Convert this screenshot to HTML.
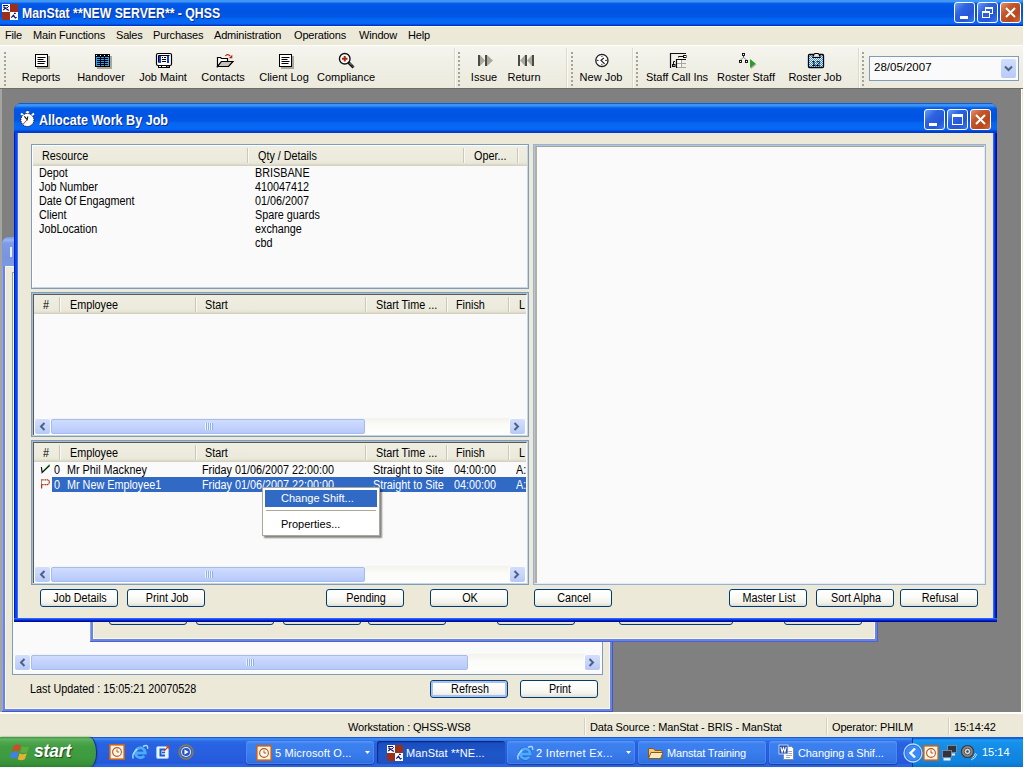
<!DOCTYPE html>
<html>
<head>
<meta charset="utf-8">
<title>ManStat</title>
<style>
*{box-sizing:border-box;margin:0;padding:0}
html,body{width:1024px;height:768px;overflow:hidden;background:#ece9d8;font-family:"Liberation Sans",sans-serif;font-size:11px;color:#000}
.abs,.abs *{position:absolute}
#root{position:relative;width:1024px;height:768px;overflow:hidden}
#root div,#root span,#root svg{position:absolute}
.t{white-space:nowrap;line-height:14px;height:14px}
/* main title */
#mtitle{left:0;top:0;width:1024px;height:26px;background:linear-gradient(to bottom,#4096f4 0,#4096f4 2px,#0c60ea 3px,#0058e6 5px,#0054e3 11px,#0157e6 17px,#0566f2 19px,#0668f6 22px,#0464f0 24px,#0338c8 25px,#0230c0 26px)}
.ttxt{color:#fff;font-weight:bold;font-size:14px;line-height:16px;height:16px;white-space:nowrap;text-shadow:1px 1px 0 #0a2a8a;transform-origin:0 0}
.wb{width:21px;height:21px;border:1px solid #fff;border-radius:3px;background:linear-gradient(135deg,#6a9cf5 0,#2d63e0 35%,#2456d8 70%,#3a78f0 100%)}
.wb.x{background:linear-gradient(135deg,#e0926a 0,#c4572a 35%,#b8481c 70%,#cf6a3a 100%)}
#menubar{left:0;top:26px;width:1024px;height:20px;background:#ece9d8;border-top:1px solid #fbfae6;border-bottom:1px solid #fdfdfa}
#menubar .t{top:1px;font-size:11px;line-height:14px;letter-spacing:-.18px}
#tb{left:0;top:46px;width:1024px;height:42px;background:linear-gradient(to bottom,#f5f4ee 0,#f1f0e7 40%,#eceadd 100%);border-top:1px solid #f6f5f0}
#tb .lbl{font-size:11px;line-height:13px;height:13px;top:24px;white-space:nowrap;text-align:center;transform:translateX(-50%)}
.grip{width:3px;height:34px;top:5px;background-image:linear-gradient(to bottom,#a6a396 0,#a6a396 2px,transparent 2px,transparent 4px);background-size:3px 4px;width:2px}
.vsep{width:2px;top:1px;height:40px;border-left:1px solid #dcdacb;border-right:1px solid #fbfaf6}
#mdi{left:0;top:88px;width:1024px;height:628px;background:#808080;border-top:1px solid #6e6d66}
/* status bar */
#status{left:0;top:716px;width:1024px;height:22px;background:#ece9d8}
/* taskbar */
#taskbar{left:0;top:738px;width:1024px;height:30px;box-shadow:0 -1px 0 #1f58d6;background:linear-gradient(to bottom,#3a86f0 0,#3a86f0 1.500px,#2c6ce8 3px,#2862e2 6px,#2860e0 14px,#265cdc 22px,#2558d8 25px,#2a66e4 27px,#2a62e0 29px,#2050c8 30px)}
.btn{border:1px solid #003c74;border-radius:3px;background:linear-gradient(to bottom,#fff 0,#fbfbf8 45%,#f2f1ea 80%,#dfdcd0 100%);text-align:center;font-size:11px;line-height:16px;height:18px;white-space:nowrap}
.win{background:#ece9d8}
.lv{background:#fafafa;border:1px solid #7f9db9}
.lvh{left:0;top:0;height:20px;background:linear-gradient(to bottom,#f1efe2 0,#ebeadb 16px,#e2dece 17px,#d6d2c2 18px,#cbc7b8 20px)}
.lvh .t{top:3px}
.hsep{top:2px;width:2px;height:15px;border-left:1px solid #cbc8b8;border-right:1px solid #f9f8f3}
.sb{height:17px;background:linear-gradient(to bottom,#f3f2ec 0,#fbfbf8 40%,#fefefd 100%)}
.sbb{width:15px;height:15px;top:1px;margin-left:1px;background:linear-gradient(to bottom,#d2defd 0,#c4d3fb 60%,#b6c8f5 100%);border-radius:2px;box-shadow:0 0 0 1px rgba(255,255,255,.7)}
.sbt{top:1px;height:15px;background:linear-gradient(to bottom,#cfdcfd 0,#c3d3fd 50%,#b7c9f8 100%);border:1px solid #a4bcf2;border-radius:2px}

.ms{font-size:12px;line-height:14px;height:14px;white-space:nowrap;transform:scaleX(.9);transform-origin:0 0}
.lv2{background:#fafafa;border:1px solid #7f9db9}
.lv2>.in{left:0;top:0;right:0;bottom:0;border:1px solid #a9bdd3;border-right-color:#c6d4e5;border-bottom-color:#c6d4e5}
.lv2>.in>.in2{left:0;top:0;right:0;bottom:0;border-left:1px solid #5a5a55;border-top:1px solid #5a5a55;border-right:1px solid #fafafa}
.hd{left:0;top:0;right:0;height:19px;background:linear-gradient(to top,#cfccbc 0,#d9d6c6 1px,#e3e0d1 2px,#e9e7d8 3px,#ebeadb 5px,#efeee2 100%)}
.sel{background:#316ac5;color:#fff}
.cm{background:#fff;border:1px solid #aca899;box-shadow:2px 2px 1.500px rgba(0,0,0,.45)}
.dbtn{border:1px solid #003c74;border-radius:3px;background:linear-gradient(to bottom,#fff 0,#fbfbf8 45%,#f2f1ea 80%,#dfdcd0 100%);height:18px;width:78px;top:456px}
.dbtn span{left:0;width:86.7px;text-align:center;top:1px}

#status .t{top:4px;letter-spacing:-.15px}
.ssep{top:2px;width:2px;height:17px;border-left:1px solid #d3d0c0;border-right:1px solid #fbfaf6}
.tkb{top:3px;width:128px;height:23px;border-radius:3px;background:linear-gradient(to bottom,#5a93f5 0,#3c80f0 3px,#3a7cec 12px,#3374e4 20px,#2c66d4 23px);box-shadow:inset 0 0 0 1px rgba(90,150,255,.5), 0 1px 1px rgba(0,0,40,.4)}
.tkb.act{background:linear-gradient(to bottom,#1546b0 0,#1a4fc0 3px,#1e56c8 12px,#1d52c2 23px);box-shadow:inset 1px 1px 1px rgba(0,0,60,.5)}
.tkb .t{color:#fff;top:5px;font-size:11px;left:29px;letter-spacing:-.1px}
#start{left:0;top:-1px;width:96px;height:31px;border-radius:0 8px 8px 0/0 15px 15px 0;background:linear-gradient(to bottom,#3a963a 0,#62b662 2px,#4fa64f 5px,#419d41 10px,#3e9a3e 21px,#379037 27px,#2c7a2c 31px);box-shadow:1px 0 1.500px rgba(0,10,30,.7)}
#start .t{left:34px;top:4px;font-size:17.500px;line-height:20px;height:20px;font-weight:bold;font-style:italic;color:#fff;text-shadow:1px 1px 1px #1d4a1d;letter-spacing:-.15px}
#tray{left:912px;top:0;width:112px;height:30px;overflow:visible;background:linear-gradient(to bottom,#0c5acc 0,#1c9cf2 2px,#1690ea 5px,#1288e4 15px,#1083de 24px,#0b70c4 30px);border-left:1px solid #0a3a90}
</style>
</head>
<body>
<div id="root">

<!-- MAIN TITLE BAR -->
<div id="mtitle">
  <svg style="left:2px;top:4px" width="16" height="16" viewBox="0 0 16 16"><rect width="16" height="16" fill="#9c2e1a"/><rect x="0" y="0" width="8" height="8" fill="#fff"/><rect x="8" y="8" width="8" height="8" fill="#fff"/><path d="M1 1.500H6M6 2.500h.8M1.200 3.200h1.800M4.500 3.500H6M3.800 3.500L1.300 6.200M3.500 4.200L6.800 6.600" stroke="#10107a" stroke-width="1.200" fill="none"/><path d="M12 9.400h1.800M9.300 13.600L11.500 11.300L13.300 14L14.600 13.200" stroke="#10107a" stroke-width="1.200" fill="none"/></svg>
  <span class="ttxt" style="left:22px;top:5px;transform:scaleX(.876)">ManStat **NEW SERVER** - QHSS</span>
  <div class="wb" style="left:954px;top:2px"><div style="left:5px;top:13px;width:8px;height:3px;background:#fff"></div></div>
  <div class="wb" style="left:977px;top:2px"><div style="left:7px;top:4px;width:8px;height:7px;border:1px solid #fff;border-top-width:2px"></div><div style="left:4px;top:8px;width:8px;height:7px;border:1px solid #fff;border-top-width:2px;background:#2c60dc"></div></div>
  <div class="wb x" style="left:1000px;top:2px"><svg style="left:4px;top:4px" width="11" height="11" viewBox="0 0 11 11"><path d="M1 1l9 9M10 1l-9 9" stroke="#fff" stroke-width="2"/></svg></div>
</div>

<!-- MENU BAR -->
<div id="menubar">
  <span class="t" style="left:5px">File</span>
  <span class="t" style="left:33px">Main Functions</span>
  <span class="t" style="left:116px">Sales</span>
  <span class="t" style="left:153px">Purchases</span>
  <span class="t" style="left:214px">Administration</span>
  <span class="t" style="left:294px">Operations</span>
  <span class="t" style="left:359px">Window</span>
  <span class="t" style="left:408px">Help</span>
</div>

<!-- TOOLBAR -->
<div id="tb">
  <div class="grip" style="left:4px"></div>
  <svg style="left:34px;top:6px" width="16" height="16" viewBox="0 0 16 16"><rect x="3" y="3" width="13" height="13" fill="#aca899"/><rect x="1.5" y="1.5" width="12" height="12" fill="#fff" stroke="#000"/><path d="M3.5 4.5h8M3.5 6.5h6M3.500 8.500h8M3.500 10.500h7" stroke="#000"/></svg>
  <svg style="left:94px;top:6px" width="18" height="17" viewBox="0 0 18 17"><rect x="3" y="3" width="15" height="13" fill="#aca899"/><rect x="1" y="1" width="15" height="13" fill="#000"/><rect x="2" y="4" width="4" height="1" fill="#28a0f8"/><rect x="7" y="4" width="3" height="1" fill="#28a0f8"/><rect x="11" y="4" width="4" height="1" fill="#28a0f8"/><rect x="2" y="6" width="4" height="1" fill="#28a0f8"/><rect x="7" y="6" width="3" height="1" fill="#28a0f8"/><rect x="11" y="6" width="4" height="1" fill="#28a0f8"/><rect x="2" y="8" width="4" height="1" fill="#28a0f8"/><rect x="7" y="8" width="3" height="1" fill="#28a0f8"/><rect x="11" y="8" width="4" height="1" fill="#28a0f8"/><rect x="2" y="10" width="4" height="1" fill="#28a0f8"/><rect x="7" y="10" width="3" height="1" fill="#28a0f8"/><rect x="11" y="10" width="4" height="1" fill="#28a0f8"/><rect x="2" y="12" width="4" height="1" fill="#28a0f8"/><rect x="7" y="12" width="3" height="1" fill="#28a0f8"/><rect x="11" y="12" width="4" height="1" fill="#28a0f8"/><rect x="2" y="4" width="1" height="9" fill="#28a0f8"/><rect x="14" y="4" width="1" height="9" fill="#28a0f8"/><rect x="2" y="2" width="1" height="1" fill="#fff"/><rect x="6" y="2" width="1" height="1" fill="#fff"/><rect x="10" y="2" width="1" height="1" fill="#fff"/><rect x="14" y="2" width="1" height="1" fill="#fff"/></svg>
  <svg style="left:155px;top:5px" width="18" height="18" viewBox="0 0 18 18"><rect x="1.500" y="1.500" width="15" height="12" rx="1.500" fill="#fff" stroke="#000" stroke-width="1.200"/><rect x="4" y="4" width="10" height="7" fill="#0a3cf0"/><rect x="6" y="4" width="6" height="7" fill="#fff"/><path d="M3.500 10.500V3.500H14.500" stroke="#000" fill="none"/><path d="M7 5.500h1M9 5.500h2M7 7.500h4M7 9.500h4" stroke="#000"/><rect x="3" y="13" width="12" height="3" fill="#000"/><path d="M4 14.500h2M7 14.500h4M12.500 14.500h1" stroke="#fff"/></svg>
  <svg style="left:216px;top:6px" width="19" height="16" viewBox="0 0 19 16"><path d="M1.500 13.500V4.500H4.500L5.500 5.500H11.500V8.500H5.500Z" fill="#fff" stroke="#000" stroke-width="1.200"/><path d="M1.500 13.500L5.500 8.500H17L12.500 13.500Z" fill="#c8c4b4" stroke="#000" stroke-width="1.200"/><path d="M9.300 3Q11.500 .2 14.300 3.200" stroke="#b82010" stroke-width="1.100" fill="none"/><path d="M16.300 1.800V5.300H12.800Z" fill="#b82010"/></svg>
  <svg style="left:278px;top:6px" width="16" height="16" viewBox="0 0 16 16"><rect x="3" y="3" width="13" height="13" fill="#aca899"/><rect x="1.5" y="1.5" width="12" height="12" fill="#fff" stroke="#000"/><path d="M3.5 4.5h8M3.5 6.5h6M3.500 8.500h8M3.500 10.500h7" stroke="#000"/></svg>
  <svg style="left:338px;top:5px" width="18" height="18" viewBox="0 0 18 18"><circle cx="6.750" cy="6.750" r="5.300" fill="#fff" stroke="#111" stroke-width="1.400"/><path d="M6.750 4v5.500M4 6.750h5.500" stroke="#b02808" stroke-width="2"/><path d="M10.500 10.500L15.500 15.500" stroke="#111" stroke-width="2.800"/><path d="M11.500 11L15 14.500" stroke="#fff" stroke-width=".9" stroke-dasharray="1 1"/></svg>
  <svg style="left:477px;top:7px" width="17" height="13" viewBox="0 0 17 13"><path d="M3 1v11l5-5.500z" fill="#aca899"/><path d="M10 1v11l6-5.500z" fill="#aca899"/><rect x="1" y="1" width="2" height="11" fill="#4a4a48"/><rect x="8" y="1" width="2" height="11" fill="#4a4a48"/></svg>
  <svg style="left:517px;top:7px" width="18" height="13" viewBox="0 0 18 13"><path d="M8 1v11l-5-5.500z" fill="#aca899"/><path d="M15 1v11l-5-5.500z" fill="#aca899"/><rect x="1" y="1" width="2" height="11" fill="#4a4a48"/><rect x="8" y="1" width="2" height="11" fill="#4a4a48"/><rect x="15" y="1" width="2" height="11" fill="#4a4a48"/></svg>
  <svg style="left:594px;top:6px" width="16" height="16" viewBox="0 0 16 16"><circle cx="7.900" cy="7.400" r="6.100" fill="#fff" stroke="#222" stroke-width="1.300"/><path d="M7.900 2.800v1.200M7.900 10.800v1.200M2.800 7.400h1.800M11.200 7.400h1.800" stroke="#222" stroke-width="1"/><path d="M9.800 5L7 7.200L10.600 10.800" stroke="#222" stroke-width="1.200" fill="none"/></svg>
  <svg style="left:669px;top:5px" width="18" height="17" viewBox="0 0 18 17"><rect x="8" y="8" width="4" height="3" fill="#fff"/><rect x="8" y="12" width="4" height="3" fill="#fff"/><path d="M8 11.500H17M8 15.500H17M12.500 8V16" stroke="#aaa79a"/><path d="M1.500 16V1.500H17" stroke="#111" stroke-width="1.200" fill="none"/><path d="M7.500 16V7.500H17" stroke="#111" stroke-width="1.200" fill="none"/><path d="M9.500 5.500V4.500H14" stroke="#111" fill="none"/><rect x="14.500" y="3.500" width="2.500" height="2" fill="#fff" stroke="#111"/><rect x="3.500" y="12.500" width="2.500" height="2" fill="#888" stroke="#111"/><path d="M4.500 12V9.500H6" stroke="#111" fill="none"/></svg>
  <svg style="left:738px;top:5px" width="19" height="17" viewBox="0 0 19 17"><path d="M5.500 4v1.500L2.500 8M5.500 5.500L8.500 8" stroke="#222" stroke-width=".8" fill="none" stroke-dasharray="1 .6"/><rect x="4.500" y="1.500" width="2" height="2" fill="#fff" stroke="#000" stroke-width=".9"/><rect x="1.500" y="8.500" width="2" height="2" fill="#fff" stroke="#000" stroke-width=".9"/><rect x="7.500" y="8.500" width="2" height="2" fill="#fff" stroke="#000" stroke-width=".9"/><path d="M13 8.500V17L18.500 12.300Z" fill="#aca899"/><path d="M12 7V16L17.500 11.500Z" fill="#28a028"/></svg>
  <svg style="left:807px;top:5px" width="18" height="17" viewBox="0 0 18 17"><defs><pattern id="chk" width="2" height="2" patternUnits="userSpaceOnUse"><rect width="2" height="2" fill="#fff"/><rect width="1" height="1" fill="#2090ff"/><rect x="1" y="1" width="1" height="1" fill="#2090ff"/></pattern></defs><rect x="1.500" y="2.500" width="15" height="13" rx="1" fill="url(#chk)" stroke="#000" stroke-width="1.300"/><path d="M5.500 5.500H13.500L11.500 1.500H7.500Z" fill="#d4d0c8" stroke="#000"/><rect x="8.500" y="2.500" width="2" height="1" fill="#fff"/><text x="9" y="13.500" font-family="Liberation Sans" font-size="8" font-weight="bold" text-anchor="middle" fill="#000">12</text></svg>
  <span class="lbl" style="left:41px">Reports</span>
  <span class="lbl" style="left:101px">Handover</span>
  <span class="lbl" style="left:163px">Job Maint</span>
  <span class="lbl" style="left:223px">Contacts</span>
  <span class="lbl" style="left:284px">Client Log</span>
  <span class="lbl" style="left:346px">Compliance</span>
  <div class="vsep" style="left:454px"></div><div class="grip" style="left:458px"></div>
  <span class="lbl" style="left:484px">Issue</span>
  <span class="lbl" style="left:524px">Return</span>
  <div class="vsep" style="left:566px"></div><div class="grip" style="left:571px"></div>
  <span class="lbl" style="left:601px">New Job</span>
  <div class="vsep" style="left:632px"></div><div class="grip" style="left:636px"></div>
  <span class="lbl" style="left:677px">Staff Call Ins</span>
  <span class="lbl" style="left:746px">Roster Staff</span>
  <span class="lbl" style="left:815px">Roster Job</span>
  <div class="vsep" style="left:858px"></div><div class="grip" style="left:862px"></div>
  <div style="left:869px;top:9px;width:150px;height:25px;background:#fafafa;border:1px solid #7f9db9">
    <span class="t" style="left:4px;top:3px;font-size:11.5px">28/05/2007</span>
    <div style="left:131px;top:2px;width:15px;height:19px;border-radius:2px;background:linear-gradient(to bottom,#d0defd,#b7caf7)"><svg style="left:3px;top:6px" width="9" height="7" viewBox="0 0 9 7"><path d="M1 1.500l3.500 3.500 3.500-3.500" stroke="#4d6185" stroke-width="2" fill="none"/></svg></div>
  </div>
</div>

<!-- MDI AREA -->
<div id="mdi">
  <div style="left:0;top:0;width:2px;height:626px;background:#a5a59f"></div>
  <div style="left:1021px;top:0;width:3px;height:626px;background:#ece9d8;border-left:1px solid #fff"></div>
  <div style="left:0;top:623px;width:1024px;height:4px;background:#ece9d8;border-top:2px solid #fff"></div>
</div>

<!-- BACK WINDOW A (inactive) -->
<div id="winA" class="win" style="left:2px;top:237px;width:611px;height:475px;border-radius:7px 7px 0 0;background:#6a84e0;overflow:hidden;box-shadow:inset -1px -1px 0 #4258c4,inset 1px 0 0 #8ea4ea">
  <div style="left:0;top:0;width:611px;height:29px;background:linear-gradient(to bottom,#7697e7 0,#9db5f0 3px,#7e9ce6 6px,#7896e0 20px,#7c9ae4 29px)"></div>
  <div style="left:8px;top:10px;width:2px;height:10px;background:#e8eefc"></div>
  <div style="left:3px;top:29px;width:605px;height:443px;background:#ece9d8;box-shadow:inset 0 0 0 1px #f8f7f2"></div>
  <div class="lv" style="left:10px;top:35px;width:591px;height:403px">
    <div class="sb" style="left:1px;top:381px;width:587px">
      <div class="sbb" style="left:0"><svg style="left:4px;top:3px" width="7" height="9" viewBox="0 0 7 9"><path d="M5.5 1L2 4.5 5.5 8" stroke="#4d6185" stroke-width="2" fill="none"/></svg></div>
      <div class="sbt" style="left:17px;width:437px"><div style="left:214px;top:3px;width:8px;height:7px;background:repeating-linear-gradient(to right,#eef4fe 0,#eef4fe 1px,#8cb0f8 1px,#8cb0f8 2px)"></div></div>
      <div class="sbb" style="left:570px"><svg style="left:3px;top:3px" width="7" height="9" viewBox="0 0 7 9"><path d="M1.5 1L5 4.5 1.5 8" stroke="#4d6185" stroke-width="2" fill="none"/></svg></div>
    </div>
  </div>
  <span class="ms" style="left:28px;top:445px">Last Updated : 15:05:21 20070528</span>
  <div class="btn" style="left:428px;top:443px;width:78px;box-shadow:inset 0 0 0 2px #a9c0f0"><span class="ms" style="left:0;top:1px;width:86.7px;text-align:center">Refresh</span></div>
  <div class="btn" style="left:518px;top:443px;width:78px"><span class="ms" style="left:0;top:1px;width:86.7px;text-align:center">Print</span></div>
</div>

<!-- MIDDLE WINDOW B (inactive) -->
<div id="winB" class="win" style="left:90px;top:300px;width:788px;height:342px;background:#6a84e0;box-shadow:inset -1px -1px 0 #4c62d0,inset 1px 0 0 #8ea4ea">
  <div style="left:3px;top:0;width:782px;height:339px;background:#ece9d8;box-shadow:inset 0 0 0 1px #f8f7f2"></div>
  <div class="btn" style="left:19px;top:307px;width:78px"></div>
  <div class="btn" style="left:106px;top:307px;width:78px"></div>
  <div class="btn" style="left:193px;top:307px;width:78px"></div>
  <div class="btn" style="left:278px;top:307px;width:78px"></div>
  <div class="btn" style="left:407px;top:307px;width:78px"></div>
  <div class="btn" style="left:529px;top:307px;width:114px"></div>
  <div class="btn" style="left:694px;top:307px;width:78px"></div>
</div>

<!-- DIALOG -->
<div id="dlg" style="left:14px;top:103px;width:983px;height:519px;border-radius:8px 8px 0 0;background:#0831d9;overflow:hidden">
  <div id="dtitle" style="left:0;top:0;width:983px;height:30px;background:linear-gradient(to bottom,#0a5fe0 0,#0a5fe0 1px,#3c94f4 1px,#3c94f4 3px,#1670ee 4px,#0058e6 6px,#0054e3 12px,#0157e6 18px,#0566f2 20px,#0668f6 25px,#0464f0 27px,#0340d0 28px,#0238c8 30px)"></div>
  <div style="left:0;top:30px;width:983px;height:489px;background:linear-gradient(to right,#0020b4 0,#0020b4 1px,#0a40f2 1px,#0a48f8 3px,#3a6cf6 3px,#3a6cf6 4px,#ece9d8 4px,#ece9d8 979px,#2e64f8 979px,#2e64f8 980px,#0a42f4 980px,#0a42f4 981px,#0420c0 981px,#0420c0 982px,#000c98 982px,#000c98 983px)"></div>
  <div style="left:0;top:515px;width:983px;height:4px;background:linear-gradient(to bottom,#2e64f8 0,#2e64f8 1px,#0a42f4 1px,#0a42f4 2px,#0420c0 2px,#0420c0 3px,#000c98 3px,#000c98 4px)"></div>
  <svg style="left:6px;top:7px" width="16" height="17" viewBox="0 0 16 17"><path d="M1 3.500L3.500 5.500M14 3.500L11.500 5.500" stroke="#fff" stroke-width="2"/><rect x="5.800" y="1" width="3.400" height="3" fill="#fff" stroke="#222" stroke-width=".6" stroke-dasharray="1 1"/><circle cx="7.400" cy="10" r="6.500" fill="#fff" stroke="#111" stroke-width="1" stroke-dasharray="1.200 1"/><path d="M4.300 6.300L7.200 9.600L7.800 6.500" stroke="#111" stroke-width="1.100" fill="none"/><path d="M7 10.200L3.200 14" stroke="#d03020" stroke-width="1.100" stroke-dasharray="1 .5"/></svg><span class="ttxt" style="left:25px;top:9px;transform:scaleX(.898)">Allocate Work By Job</span>
  <div class="wb" style="left:910px;top:6px"><div style="left:4px;top:13px;width:8px;height:3px;background:#fff"></div></div>
  <div class="wb" style="left:933px;top:6px"><div style="left:4px;top:4px;width:11px;height:11px;border:1px solid #fff;border-top-width:3px"></div></div>
  <div class="wb x" style="left:956px;top:6px"><svg style="left:4px;top:4px" width="11" height="11" viewBox="0 0 11 11"><path d="M1 1l9 9M10 1l-9 9" stroke="#fff" stroke-width="2"/></svg></div>
  <div id="dc" style="left:4px;top:30px;width:975px;height:485px;background:#ece9d8">
<div class="lv2" style="left:13px;top:11px;width:498px;height:145px"><div class="in" style="border-color:#fff #c6d4e5 #c6d4e5 #fff"><div class="hd" style="height:20px"><span class="ms" style="left:9px;top:3px">Resource</span><div class="hsep" style="left:214px"></div><span class="ms" style="left:225px;top:3px">Qty / Details</span><div class="hsep" style="left:430px"></div><span class="ms" style="left:441px;top:3px">Oper...</span><div class="hsep" style="left:484px"></div></div><span class="ms" style="left:6px;top:20px">Depot</span><span class="ms" style="left:222px;top:20px">BRISBANE</span><span class="ms" style="left:6px;top:34px">Job Number</span><span class="ms" style="left:222px;top:34px">410047412</span><span class="ms" style="left:6px;top:48px">Date Of Engagment</span><span class="ms" style="left:222px;top:48px">01/06/2007</span><span class="ms" style="left:6px;top:62px">Client</span><span class="ms" style="left:222px;top:62px">Spare guards</span><span class="ms" style="left:6px;top:76px">JobLocation</span><span class="ms" style="left:222px;top:76px">exchange</span><span class="ms" style="left:6px;top:90px"></span><span class="ms" style="left:222px;top:90px">cbd</span></div></div><div class="lv2" style="left:13px;top:159px;width:498px;height:145px"><div class="in"><div class="in2" style="overflow:hidden"><div class="hd"><span class="ms" style="left:9px;top:3px">#</span><span class="ms" style="left:36px;top:3px">Employee</span><span class="ms" style="left:171px;top:3px">Start</span><span class="ms" style="left:342px;top:3px">Start Time ...</span><span class="ms" style="left:422px;top:3px">Finish</span><span class="ms" style="left:485px;top:3px">L</span><div class="hsep" style="left:25px"></div><div class="hsep" style="left:161px"></div><div class="hsep" style="left:331px"></div><div class="hsep" style="left:412px"></div><div class="hsep" style="left:474px"></div></div><div class="sb" style="left:0;top:123px;width:492px">
      <div class="sbb" style="left:0"><svg style="left:4px;top:3px" width="7" height="9" viewBox="0 0 7 9"><path d="M5.5 1L2 4.5 5.5 8" stroke="#4d6185" stroke-width="2" fill="none"/></svg></div>
      <div class="sbt" style="left:17px;width:314px"><div style="left:153px;top:3px;width:8px;height:7px;background:repeating-linear-gradient(to right,#eef4fe 0,#eef4fe 1px,#8cb0f8 1px,#8cb0f8 2px)"></div></div>
      <div class="sbb" style="left:475px"><svg style="left:3px;top:3px" width="7" height="9" viewBox="0 0 7 9"><path d="M1.5 1L5 4.5 1.5 8" stroke="#4d6185" stroke-width="2" fill="none"/></svg></div>
    </div></div></div></div><div class="lv2" style="left:13px;top:307px;width:498px;height:145px"><div class="in"><div class="in2" style="overflow:hidden"><div class="hd"><span class="ms" style="left:9px;top:3px">#</span><span class="ms" style="left:36px;top:3px">Employee</span><span class="ms" style="left:171px;top:3px">Start</span><span class="ms" style="left:342px;top:3px">Start Time ...</span><span class="ms" style="left:422px;top:3px">Finish</span><span class="ms" style="left:485px;top:3px">L</span><div class="hsep" style="left:25px"></div><div class="hsep" style="left:161px"></div><div class="hsep" style="left:331px"></div><div class="hsep" style="left:412px"></div><div class="hsep" style="left:474px"></div></div><span class="ms" style="left:20px;top:20px">0</span><span class="ms" style="left:33px;top:20px">Mr Phil Mackney</span><span class="ms" style="left:168px;top:20px">Friday 01/06/2007 22:00:00</span><span class="ms" style="left:339px;top:20px">Straight to Site</span><span class="ms" style="left:420px;top:20px">04:00:00</span><span class="ms" style="left:482px;top:20px">A:</span><div class="sel" style="left:18px;top:34px;width:480px;height:15px"></div><span class="ms" style="left:20px;top:35px;color:#fff">0</span><span class="ms" style="left:33px;top:35px;color:#fff">Mr New Employee1</span><span class="ms" style="left:168px;top:35px;color:#fff">Friday 01/06/2007 22:00:00</span><span class="ms" style="left:339px;top:35px;color:#fff">Straight to Site</span><span class="ms" style="left:420px;top:35px;color:#fff">04:00:00</span><span class="ms" style="left:482px;top:35px;color:#fff">A:</span><svg style="left:6px;top:20px" width="11" height="11" viewBox="0 0 11 11"><path d="M2.600 8.800L9.700 1.800" stroke="#2cb02c" stroke-width="1.200" fill="none"/><path d="M1.400 4L2.100 9.600L9.500 2.600" stroke="#111" stroke-width="1.200" fill="none"/></svg><svg style="left:6px;top:35px" width="11" height="12" viewBox="0 0 11 12"><path d="M1.600 1.500V10.500" stroke="#a83410" stroke-width="1.200"/><path d="M1.600 1.800H7Q9.300 1.800 9.300 4.200Q9.300 6.600 7 6.600H1.600" stroke="#a83410" stroke-width="1.300" fill="#fafafa" stroke-dasharray="1.200 .500"/></svg><div class="sb" style="left:0;top:123px;width:492px">
      <div class="sbb" style="left:0"><svg style="left:4px;top:3px" width="7" height="9" viewBox="0 0 7 9"><path d="M5.5 1L2 4.5 5.5 8" stroke="#4d6185" stroke-width="2" fill="none"/></svg></div>
      <div class="sbt" style="left:17px;width:314px"><div style="left:153px;top:3px;width:8px;height:7px;background:repeating-linear-gradient(to right,#eef4fe 0,#eef4fe 1px,#8cb0f8 1px,#8cb0f8 2px)"></div></div>
      <div class="sbb" style="left:475px"><svg style="left:3px;top:3px" width="7" height="9" viewBox="0 0 7 9"><path d="M1.5 1L5 4.5 1.5 8" stroke="#4d6185" stroke-width="2" fill="none"/></svg></div>
    </div></div></div></div><div style="left:515px;top:11px;width:453px;height:441px;background:#fafafa;border:1px solid #9ab2d0"><div style="left:0;top:0;right:0;bottom:0;border:1px solid #b4c5da;border-right-color:#e4ebf3;border-bottom-color:#e4ebf3"><div style="left:0;top:0;right:0;bottom:0;border-left:2px solid #b3b0a2;border-top:1px solid #a5a296"></div></div></div><div class="dbtn" style="left:22px"><span class="ms">Job Details</span></div><div class="dbtn" style="left:109px"><span class="ms">Print Job</span></div><div class="dbtn" style="left:308px"><span class="ms">Pending</span></div><div class="dbtn" style="left:412px"><span class="ms">OK</span></div><div class="dbtn" style="left:516px"><span class="ms">Cancel</span></div><div class="dbtn" style="left:711px"><span class="ms">Master List</span></div><div class="dbtn" style="left:798px"><span class="ms">Sort Alpha</span></div><div class="dbtn" style="left:882px"><span class="ms">Refusal</span></div><div class="cm" style="left:244px;top:354px;width:118px;height:49px"><div class="sel" style="left:2px;top:2px;width:112px;height:17px"></div><span class="t" style="left:18px;top:3px;color:#fff">Change Shift...</span><div style="left:3px;top:22px;width:110px;height:1px;background:#aca899"></div><span class="t" style="left:18px;top:29px">Properties...</span></div>
  </div>
</div>

<!-- STATUS BAR -->
<div id="status">
  <span class="t" style="left:348px">Workstation : QHSS-WS8</span>
  <div class="ssep" style="left:584px"></div>
  <span class="t" style="left:590px">Data Source : ManStat - BRIS - ManStat</span>
  <div class="ssep" style="left:826px"></div>
  <span class="t" style="left:832px">Operator: PHILM</span>
  <div class="ssep" style="left:948px"></div>
  <span class="t" style="left:954px">15:14:42</span>
</div>

<!-- TASKBAR -->
<div id="taskbar">
  <div id="start"><span class="t">start</span>
    <svg style="left:10px;top:6px" width="22" height="18" viewBox="0 0 20 18" preserveAspectRatio="none"><path d="M3.500 2.500q3-2 6.500 0l-1.800 6q-3.500-2-6.500 0z" fill="#d04c28"/><path d="M11 3q3 2 6.500 0l-1.800 6q-3.500 2-6.500 0z" fill="#5cae3c"/><path d="M1.300 9.800q3-2 6.500 0l-1.800 6q-3.500-2-6.500 0z" fill="#3f80ec"/><path d="M8.800 10.300q3 2 6.500 0l-1.800 6q-3.500 2-6.500 0z" fill="#e8b030"/></svg>
  </div>
  <svg style="left:109px;top:6px" width="16" height="16" viewBox="0 0 16 16"><rect x=".800" y=".800" width="14.400" height="14.400" fill="#fdf5e6" stroke="#c8601c" stroke-width="1.600"/><circle cx="8" cy="8" r="4.400" fill="#fffaf0" stroke="#b85820" stroke-width="1.100"/><path d="M8 5.300v2.700h2.200" stroke="#b85820" fill="none"/></svg><svg style="left:132px;top:6px" width="17" height="16" viewBox="0 0 17 16"><path d="M4 8.900H13.300A5 5 0 1 0 12.200 11.900" fill="none" stroke="#1a58c4" stroke-width="3.900"/><path d="M4 8.900H13.300A5 5 0 1 0 12.200 11.900" fill="none" stroke="#4eaaff" stroke-width="3"/><path d="M1.300 14.500q-2-4.500 4-9.500M11 2.300q5.500-2.500 4.500 2.500" fill="none" stroke="#a8dcff" stroke-width="1.400"/></svg><svg style="left:155px;top:6px" width="16" height="16" viewBox="0 0 16 16"><rect x="1.500" y="2.500" width="12" height="12" rx="1.500" fill="#eaf4ff" stroke="#8cc0f0"/><path d="M10 5.500h-4.500v6h4.500" fill="none" stroke="#1c5ad0" stroke-width="2"/><path d="M7 8.500h3" stroke="#1c5ad0" stroke-width="1.500"/><path d="M9 7l5-5M11 2h3v3" stroke="#d04020" stroke-width="1.200" fill="none"/></svg><svg style="left:178px;top:6px" width="16" height="16" viewBox="0 0 16 16"><circle cx="8" cy="8" r="7" fill="#3a66c8" stroke="#8a7c4c" stroke-width="1.400"/><circle cx="8" cy="8" r="5" fill="#e8f0ff"/><circle cx="8" cy="8" r="4" fill="#2c54c0"/><path d="M6.500 5.500v5l4.200-2.500z" fill="#fff"/></svg>
  <div class="tkb" style="left:246px"><svg style="left:10px;top:4px" width="16" height="16" viewBox="0 0 16 16"><rect x=".800" y=".800" width="14.400" height="14.400" fill="#fdf5e6" stroke="#c8601c" stroke-width="1.600"/><circle cx="8" cy="8" r="4.400" fill="#fffaf0" stroke="#b85820" stroke-width="1.100"/><path d="M8 5.300v2.700h2.200" stroke="#b85820" fill="none"/></svg><span class="t" style="letter-spacing:0.12px">5 Microsoft O...</span><svg style="left:119px;top:10px" width="5" height="3" viewBox="0 0 5 3"><path d="M0 0h5l-2.500 3z" fill="#fff"/></svg></div>
  <div class="tkb act" style="left:377px"><svg style="left:10px;top:4px" width="16" height="16" viewBox="0 0 16 16"><rect width="16" height="16" fill="#9c2e1a"/><rect x="0" y="0" width="8" height="8" fill="#fff"/><rect x="8" y="8" width="8" height="8" fill="#fff"/><path d="M1 1.500H6M6 2.500h.8M1.200 3.200h1.800M4.500 3.500H6M3.800 3.500L1.300 6.200M3.500 4.200L6.800 6.600" stroke="#10107a" stroke-width="1.200" fill="none"/><path d="M12 9.400h1.800M9.300 13.600L11.500 11.300L13.300 14L14.600 13.200" stroke="#10107a" stroke-width="1.200" fill="none"/></svg><span class="t" style="letter-spacing:0.11px">ManStat **NE...</span></div>
  <div class="tkb" style="left:507px"><svg style="left:10px;top:4px" width="17" height="16" viewBox="0 0 17 16"><path d="M4 8.900H13.300A5 5 0 1 0 12.200 11.900" fill="none" stroke="#1a58c4" stroke-width="3.900"/><path d="M4 8.900H13.300A5 5 0 1 0 12.200 11.900" fill="none" stroke="#4eaaff" stroke-width="3"/><path d="M1.300 14.500q-2-4.500 4-9.500M11 2.300q5.500-2.500 4.500 2.500" fill="none" stroke="#a8dcff" stroke-width="1.400"/></svg><span class="t" style="letter-spacing:0.34px">2 Internet Ex...</span><svg style="left:119px;top:10px" width="5" height="3" viewBox="0 0 5 3"><path d="M0 0h5l-2.500 3z" fill="#fff"/></svg></div>
  <div class="tkb" style="left:638px"><svg style="left:9px;top:4px" width="17" height="16" viewBox="0 0 17 16"><path d="M1.500 13.500v-10h5l1.500 2h7v8z" fill="#f0c878" stroke="#8a5a1c"/><path d="M1.500 13.500l2.500-6h12l-2.500 6z" fill="#fbe8b8" stroke="#8a5a1c"/></svg><span class="t" style="letter-spacing:-0.14px">Manstat Training</span></div>
  <div class="tkb" style="left:769px"><svg style="left:9px;top:3px" width="17" height="17" viewBox="0 0 17 17"><path d="M5.500 2.500h8l2 2v11h-10z" fill="#fff" stroke="#7a8aa8"/><path d="M8 7.500h6M8 9.500h6M8 11.500h6M8 13.500h4" stroke="#9aa8c0"/><rect x="1" y="1" width="9" height="9" fill="#2a4fa8" stroke="#dfe8ff" stroke-width=".8"/><path d="M2.800 3l1.300 5 1.400-4 1.400 4 1.300-5" stroke="#fff" stroke-width="1.100" fill="none"/></svg><span class="t" style="letter-spacing:-0.1px">Changing a Shif...</span></div>
  <div id="tray"><svg style="left:-10px;top:5px" width="20" height="20" viewBox="0 0 20 20"><circle cx="10" cy="10" r="9" fill="#2a6ee8" stroke="#bcd8ff" stroke-width="1.300"/><circle cx="10" cy="10" r="7.500" fill="#3a8af8"/><path d="M12 5.500l-4.500 4.500 4.500 4.500" stroke="#fff" stroke-width="2.400" fill="none"/></svg><svg style="left:10px;top:7px" width="16" height="16" viewBox="0 0 16 16"><rect x=".800" y=".800" width="14.400" height="14.400" fill="#fdf5e6" stroke="#c8601c" stroke-width="1.600"/><circle cx="8" cy="8" r="4.400" fill="#fffaf0" stroke="#b85820" stroke-width="1.100"/><path d="M8 5.300v2.700h2.200" stroke="#b85820" fill="none"/></svg><svg style="left:28px;top:6px" width="17" height="17" viewBox="0 0 17 17"><rect x="6.500" y="1.500" width="9" height="7" fill="#30353c" stroke="#8a94a8" stroke-width=".8"/><path d="M9 10.500h5" stroke="#e8eef8" stroke-width="2"/><rect x="1.500" y="6.500" width="9" height="7" fill="#30353c" stroke="#8a94a8" stroke-width=".8"/><path d="M2.500 15.300h7" stroke="#e8eef8" stroke-width="2.400"/></svg><svg style="left:47px;top:6px" width="18" height="18" viewBox="0 0 18 18"><circle cx="7.500" cy="7.500" r="6" fill="#8a8a8a" stroke="#3a3a3a" stroke-width="1.200"/><circle cx="7.500" cy="7.500" r="3.300" fill="#d8d8d8" stroke="#555"/><circle cx="7.500" cy="7.500" r="1.200" fill="#444"/><path d="M12.500 13.500q2.500-1.500 3-4.500M11 16q4-1 6-6" stroke="#cfe4ff" stroke-width=".9" fill="none"/></svg><span class="t" style="left:69px;top:7px;color:#fff">15:14</span></div>
</div>

<div style="left:1023px;top:0;width:1px;height:768px;background:#fff"></div>
<div style="left:0;top:767px;width:1024px;height:1px;background:#f4f6fb"></div>
</div>
</body>
</html>
